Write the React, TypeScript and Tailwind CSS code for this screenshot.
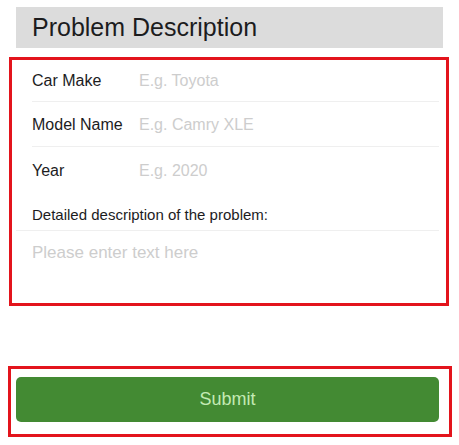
import React from "react";

const rows = [
  { label: "Car Make", placeholder: "E.g. Toyota", h: "h-[42px]" },
  { label: "Model Name", placeholder: "E.g. Camry XLE", h: "h-[45px] pt-[2px]" },
  { label: "Year", placeholder: "E.g. 2020", h: "h-[45px] pt-[2px]" },
];

export default function App() {
  const [values, setValues] = React.useState<Record<string, string>>({});
  const [details, setDetails] = React.useState("");

  return (
    <div className="min-h-[445px] w-[459px] bg-white font-['Liberation_Sans',Arial,sans-serif] text-[#1c1c1e]">
      {/* header */}
      <div className="mx-4 mt-[7px] flex h-[41px] items-center bg-[#dcdcdc] pl-4">
        <h1 className="text-[25px] leading-none">Problem Description</h1>
      </div>

      {/* form fields */}
      <div className="ml-[9px] mt-[9px] w-[440px] border-[3px] border-[#e3141c] pl-1 pr-[7px]">
        {rows.map((row, i) => (
          <div
            key={row.label}
            className={`ml-4 flex items-center ${row.h} ${i < 2 ? "border-b border-[#efefef]" : ""}`}
          >
            <span className="w-[107px] shrink-0 text-[16px]">{row.label}</span>
            <input
              className="min-w-0 flex-1 bg-transparent text-[16px] outline-none placeholder:text-[#cdcdcd]"
              placeholder={row.placeholder}
              value={values[row.label] ?? ""}
              onChange={(e) => setValues({ ...values, [row.label]: e.target.value })}
            />
          </div>
        ))}
        <div className="border-b border-[#efefef] pb-[6px] pl-4 pt-[14px] text-[15px] leading-[18px]">
          Detailed description of the problem:
        </div>
        <textarea
          className="block h-[72px] w-full resize-none bg-transparent pl-4 pt-[12px] text-[17px] leading-[20px] outline-none placeholder:text-[#cdcdcd]"
          placeholder="Please enter text here"
          value={details}
          onChange={(e) => setDetails(e.target.value)}
        />
      </div>

      {/* submit */}
      <div className="ml-2 mt-[60px] w-[444px] border-[3px] border-[#e3141c] pb-3 pl-[5px] pr-[10px] pt-2">
        <button
          type="button"
          className="flex h-[45px] w-full items-center justify-center rounded-[5px] bg-[#438a33] text-[18px] text-[#c3eab4]"
        >
          Submit
        </button>
      </div>
    </div>
  );
}
